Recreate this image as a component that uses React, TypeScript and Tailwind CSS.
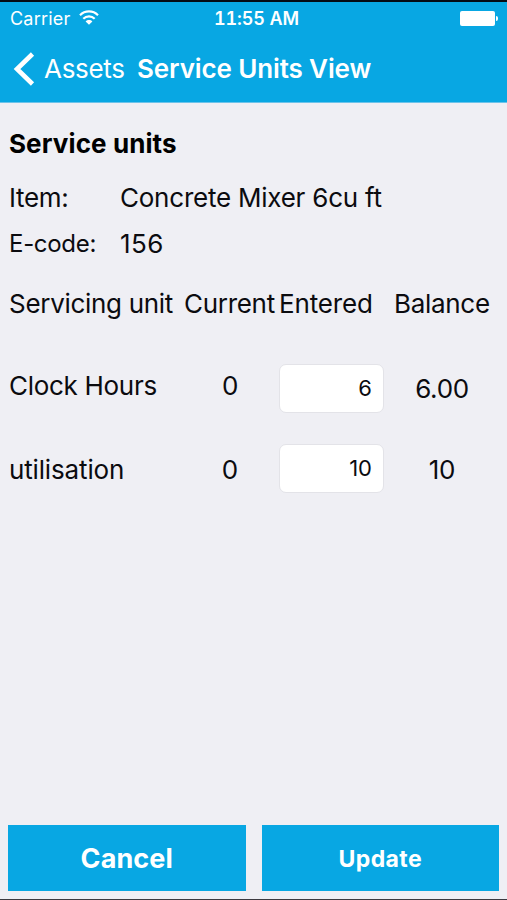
import { useState } from "react";

type ServiceUnit = {
  name: string;
  current: string;
  entered: string;
  balance: string;
  // name and current value are not on the same line as the balance in every row
  labelClass: string;
  balanceClass: string;
};

const UNITS: ServiceUnit[] = [
  { name: "Clock Hours", current: "0", entered: "6", balance: "6.00", labelClass: "pb-[6px] tracking-[-0.3px]", balanceClass: "" },
  { name: "utilisation", current: "0", entered: "10", balance: "10", labelClass: "pt-[2px] tracking-[-0.15px]", balanceClass: "pt-[2px]" },
];

function WifiIcon() {
  return (
    <svg width="20" height="15" viewBox="0 0 20 15" fill="none" stroke="currentColor" strokeWidth="2.2">
      <path d="M1 5.2C6 0.2 14 0.2 19 5.2" />
      <path d="M4.3 8.8c3.2-3.2 8.2-3.2 11.4 0" />
      <path d="M10 14.8 6.6 11.4c1.9-1.9 4.9-1.9 6.8 0Z" fill="currentColor" stroke="none" />
    </svg>
  );
}

function StatusBar() {
  return (
    <div className="grid h-[31px] grid-cols-3 items-center pt-[2px] text-[18px] leading-[28px]">
      <div className="flex items-center gap-[9px] pl-[10px]">
        <span className="tracking-[0.2px]">Carrier</span>
        <div className="pb-[3px]">
          <WifiIcon />
        </div>
      </div>
      <span className="whitespace-nowrap pl-[6px] text-center font-semibold tabular-nums tracking-[-0.1px]">11:55 AM</span>
      <div className="flex items-center justify-end gap-px pb-px pr-[9px]">
        <span className="h-[15px] w-[35px] rounded-[2px] bg-white" />
        <span className="h-[5px] w-[2px] rounded-r-full bg-white" />
      </div>
    </div>
  );
}

function NavBar() {
  return (
    <div className="flex h-[70px] items-center whitespace-nowrap pl-[13px] pt-[2px] text-[26px] leading-[34px]">
      <svg width="22" height="34" viewBox="0 0 22 34" fill="none" stroke="currentColor" strokeWidth="4.6">
        <path d="M19.5 2 4 17l15.5 15" />
      </svg>
      <span className="ml-[9px] w-[93px] tracking-[-0.3px]">Assets</span>
      <h1 className="font-semibold tracking-[-0.12px]">Service Units View</h1>
    </div>
  );
}

export default function App() {
  const [units, setUnits] = useState(UNITS);

  function setEntered(index: number, entered: string) {
    setUnits(units.map((u, i) => (i === index ? { ...u, entered } : u)));
  }

  return (
    <div className="flex h-[900px] w-[507px] flex-col overflow-hidden border-b border-[#3c3a40] bg-[#efeff4] font-['Inter',sans-serif] text-[26px] leading-[34px] text-[#0b0b0f]">
      <header className="h-[103px] shrink-0 border-t-2 border-b border-t-[#040b14] border-b-[#6cc3ea] bg-[#08a7e3] text-white">
        <StatusBar />
        <NavBar />
      </header>

      <main className="flex-1 whitespace-nowrap px-[9px] pt-[24px]">
        <h2 className="font-bold tracking-[0.1px] text-black">Service units</h2>

        <dl className="mt-[20px] grid grid-cols-[111px_1fr] gap-y-[12px]">
          <dt className="tracking-[-0.3px]">Item:</dt>
          <dd className="tracking-[-0.23px]">Concrete Mixer 6cu ft</dd>
          <dt className="text-[24px] tracking-[-0.3px]">E-code:</dt>
          <dd className="tracking-[0.4px]">156</dd>
        </dl>

        <div className="mt-[26px] grid grid-cols-[175px_95px_115px_1fr] tracking-[-0.3px]">
          <span>Servicing unit</span>
          <span>Current</span>
          <span className="tracking-[-0.15px]">Entered</span>
          <span>Balance</span>
        </div>

        <div className="mt-[43px] flex flex-col gap-[31px]">
          {units.map((unit, i) => (
            <div key={unit.name} className="grid h-[49px] grid-cols-[175px_95px_105px_1fr] items-center">
              <span className={unit.labelClass}>{unit.name}</span>
              <span className={`pr-[3px] text-center ${unit.labelClass}`}>{unit.current}</span>
              <input
                value={unit.entered}
                onChange={(e) => setEntered(i, e.target.value)}
                className="h-[49px] w-[105px] rounded-[7px] border border-[#e3e3e8] bg-white pb-[2px] pr-[11px] text-right text-[22px] outline-none"
              />
              <span className={`pl-[2px] text-center tracking-[-0.3px] ${unit.balanceClass}`}>{unit.balance}</span>
            </div>
          ))}
        </div>
      </main>

      <footer className="grid grid-cols-2 gap-[16px] px-[8px] pb-[8px] font-bold text-white">
        <button className="h-[66px] bg-[#08a7e3] pt-px text-[27px] tracking-[0.1px]">Cancel</button>
        <button className="h-[66px] bg-[#08a7e3] pt-px text-[23px] tracking-[0.4px]">Update</button>
      </footer>
    </div>
  );
}
